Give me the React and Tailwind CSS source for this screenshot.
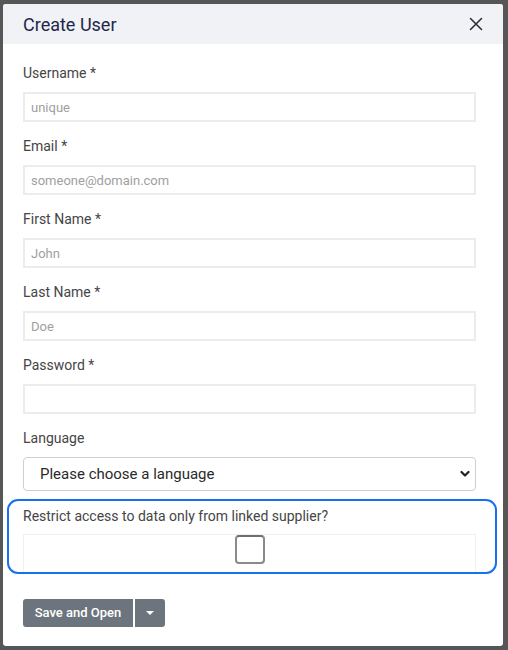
export default function App() {
  const fields = [
    { label: 'Username *', placeholder: 'unique', type: 'text' },
    { label: 'Email *', placeholder: 'someone@domain.com', type: 'text' },
    { label: 'First Name *', placeholder: 'John', type: 'text' },
    { label: 'Last Name *', placeholder: 'Doe', type: 'text' },
    { label: 'Password *', placeholder: '', type: 'password' },
  ]

  return (
    <div className="w-[508px] h-[650px] bg-[#565656] pt-[4px] pl-[3px] font-['Roboto',sans-serif]">
      <div className="w-[500px] h-[642px] bg-white rounded-[3px] overflow-hidden">
        <div className="h-[40px] bg-[#f1f2f6] flex items-center justify-between pl-[20px] pr-[20px]">
          <h3 className="text-[18px] text-[#1e2749]">Create User</h3>
          <svg width="14" height="14" viewBox="0 0 14 14" className="mr-[0px]">
            <path d="M1.5 1.5 L12.5 12.5 M12.5 1.5 L1.5 12.5" stroke="#2b2f36" strokeWidth="1.6" strokeLinecap="round" />
          </svg>
        </div>

        <div className="pt-[19px] pl-[20px] pr-[27px]">
          {fields.map(f => (
            <div key={f.label} className="mb-[14px]">
              <label className="block h-[20px] leading-[20px] text-[14px] text-[#454545] mb-[9px]">{f.label}</label>
              <input type={f.type} placeholder={f.placeholder}
                className="block w-full h-[30px] border-2 border-[#ececec] px-[6px] text-[13px] text-[#333] placeholder:text-[#a0a0a0] outline-none" />
            </div>
          ))}

          <div>
            <label className="block h-[20px] leading-[20px] text-[14px] text-[#454545] mb-[9px]">Language</label>
            <div className="relative">
              <select className="block w-full h-[34px] appearance-none border border-[#cfcfcf] rounded-[4px] pl-[16px] text-[15px] text-[#2a2a2a] bg-white outline-none">
                <option>Please choose a language</option>
              </select>
              <svg width="10" height="8" viewBox="0 0 10 8" className="absolute right-[6px] top-[13px] pointer-events-none">
                <path d="M1.5 2 L5 5.5 L8.5 2" stroke="#222" strokeWidth="2.2" fill="none" strokeLinecap="round" strokeLinejoin="round" />
              </svg>
            </div>
          </div>

          <div className="-ml-[16px] -mr-[21px] mt-[8px] h-[75px] border-[2.5px] border-[#1a6ef0] rounded-[11px] pl-[14px] pr-[19px] pt-[5px]">
            <label className="block h-[20px] leading-[20px] text-[14px] text-[#454545]">Restrict access to data only from linked supplier?</label>
            <div className="mt-[8px] h-[38px] border-t border-x border-[#f0f0f0] flex justify-center">
              <input type="checkbox" className="appearance-none w-[30px] h-[29px] border-2 border-[#8a8a8a] border-t-[#6e6e6e] rounded-[4px] bg-white" />
            </div>
          </div>

          <div className="flex gap-[2px] mt-[25px]">
            <button className="h-[28px] w-[110px] bg-[#6c757d] text-white text-[13px] font-medium rounded-l-[3px]">Save and Open</button>
            <button className="h-[28px] w-[30px] bg-[#6c757d] rounded-r-[3px] flex items-center justify-center">
              <svg width="10" height="6" viewBox="0 0 10 6">
                <path d="M1 1 L9 1 L5 5 Z" fill="white" />
              </svg>
            </button>
          </div>
        </div>
      </div>
    </div>
  )
}
